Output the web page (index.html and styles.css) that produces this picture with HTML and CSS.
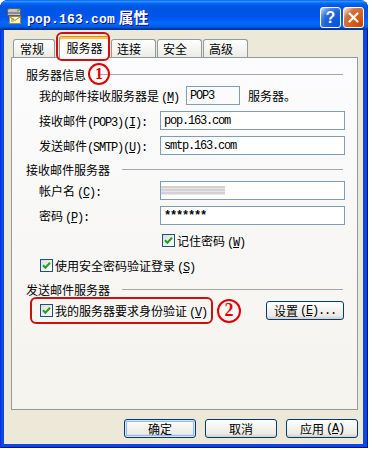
FILE: index.html
```html
<!DOCTYPE html>
<html lang="zh-CN">
<head>
    <meta charset="UTF-8">
    <title>pop.163.com 属性</title>
    <link rel="stylesheet" href="styles.css">
</head>
<body>
    <div class="window">
        <!-- 标题栏 -->
        <div class="titlebar">
            <svg class="app-icon" viewBox="0 0 16 18" width="16" height="18">
                <path d="M1.5 3.5 Q1.5 1.5 3.5 1.5 H12.5 Q14.5 1.5 14.5 3.5 V8.5 H1.5 Z" fill="#c4c4c4" stroke="#5c5c5c"/>
                <rect x="2" y="5" width="12" height="2" fill="#8c8c8c"/>
                <circle cx="12.2" cy="3.4" r="1.1" fill="#2fc43a"/>
                <rect x="3.5" y="9.5" width="11" height="7" fill="#fff8c8" stroke="#9c8a3e"/>
                <path d="M3.5 9.5 L9 13.5 L14.5 9.5 M5 12 H8 M5 14 H8" fill="none" stroke="#9c8a3e"/>
            </svg>
            <span class="title"><span class="lat">pop.163.com</span> 属性</span>
            <div class="controls">
                <span class="ctl ctl-help">?</span>
                <span class="ctl ctl-close">
                    <svg width="11" height="11" viewBox="0 0 11 11"><path d="M1.5 1.5 L9.5 9.5 M9.5 1.5 L1.5 9.5" stroke="#fff" stroke-width="2.2" stroke-linecap="round"/></svg>
                </span>
            </div>
        </div>

        <div class="client">
            <!-- 选项卡 -->
            <div class="tabs">
                <div class="tab tab-first">常规</div>
                <div class="tab tab-active">服务器<span class="mark-tab"></span></div>
                <div class="tab">连接</div>
                <div class="tab">安全</div>
                <div class="tab">高级</div>
            </div>

            <div class="panel">
                <div class="group-title">服务器信息<span class="line"></span><span class="circle circle-1">1</span></div>
                <div class="row">
                    <span class="label label-auto">我的邮件接收服务器是<span class="lat acc">(<u>M</u>)</span></span>
                    <span class="field field-ro"><span class="lat">POP3</span></span>
                    <span>服务器。</span>
                </div>
                <div class="row">
                    <span class="label">接收邮件<span class="lat">(POP3)(<u>I</u>):</span></span>
                    <span class="field"><span class="lat">pop.163.com</span></span>
                </div>
                <div class="row">
                    <span class="label">发送邮件<span class="lat">(SMTP)(<u>U</u>):</span></span>
                    <span class="field"><span class="lat">smtp.163.com</span></span>
                </div>

                <div class="group-title">接收邮件服务器<span class="line"></span></div>
                <div class="row">
                    <span class="label">帐户名<span class="lat acc">(<u>C</u>):</span></span>
                    <span class="field field-blur"><span class="blur"></span></span>
                </div>
                <div class="row">
                    <span class="label">密码<span class="lat acc">(<u>P</u>):</span></span>
                    <span class="field"><span class="lat pw">*******</span></span>
                </div>
                <div class="row row-check row-check-indent">
                    <span class="check"><svg width="9" height="9" viewBox="0 0 9 9"><path d="M1 4.3 L3.4 6.8 L8 1.8" fill="none" stroke="#21a121" stroke-width="2"/></svg></span>
                    <span>记住密码<span class="lat acc">(<u>W</u>)</span></span>
                </div>
                <div class="row row-check">
                    <span class="check"><svg width="9" height="9" viewBox="0 0 9 9"><path d="M1 4.3 L3.4 6.8 L8 1.8" fill="none" stroke="#21a121" stroke-width="2"/></svg></span>
                    <span>使用安全密码验证登录<span class="lat acc">(<u>S</u>)</span></span>
                </div>

                <div class="group-title">发送邮件服务器<span class="line"></span></div>
                <div class="row row-auth">
                    <span class="mark-row">
                        <span class="check"><svg width="9" height="9" viewBox="0 0 9 9"><path d="M1 4.3 L3.4 6.8 L8 1.8" fill="none" stroke="#21a121" stroke-width="2"/></svg></span>
                        <span>我的服务器要求身份验证<span class="lat acc">(<u>V</u>)</span></span>
                    </span>
                    <span class="circle circle-2">2</span>
                    <span class="btn btn-set">设置<span class="lat acc">(<u>E</u>)...</span></span>
                </div>
            </div>

            <!-- 底部按钮 -->
            <div class="actions">
                <span class="btn btn-default">确定</span>
                <span class="btn">取消</span>
                <span class="btn">应用<span class="lat acc">(<u>A</u>)</span></span>
            </div>
        </div>
    </div>
</body>
</html>
```

FILE: styles.css
```css
body {
    margin: 0;
    background: #fff;
    font-family: "Noto Sans CJK SC", sans-serif;
    font-size: 12px;
    color: #000;
}
.lat {
    font-family: "Liberation Mono", "Noto Sans CJK SC", monospace;
    font-size: 12px;
    letter-spacing: -1.2px;
}
.acc {
    margin-left: 2px;
}

/* 窗口框架 */
.window {
    width: 368px;
    height: 448px;
    box-sizing: border-box;
    background: #0a47e4;
    border-radius: 8px 8px 0 0;
    box-shadow: inset 1px 0 #0831d9, inset -1px -1px #00138c;
    display: flex;
    flex-direction: column;
    overflow: hidden;
}
.titlebar {
    height: 30px;
    flex-shrink: 0;
    display: flex;
    align-items: center;
    padding: 0 4px 0 6px;
    border-radius: 8px 8px 0 0;
    background: linear-gradient(to bottom, #0058ee 0%, #3593ff 4%, #288eff 6%, #127dff 8%, #036ffc 10%, #0262ee 14%, #0057e5 20%, #0054e3 24%, #0055eb 56%, #005bf5 66%, #026afe 76%, #0062ef 86%, #0052d6 92%, #0040ab 94%, #003092 100%);
}
.app-icon {
    margin: 2px 5px 0 0;
}
.title {
    flex: 1;
    margin-top: 3px;
    color: #fff;
    font-size: 15px;
    font-weight: bold;
    text-shadow: 1px 1px #0f1089;
}
.title .lat {
    font-size: 13px;
    font-weight: bold;
    letter-spacing: 0.2px;
}
.controls {
    display: flex;
    gap: 2px;
    align-self: flex-start;
    margin-top: 7px;
}
.ctl {
    width: 21px;
    height: 21px;
    box-sizing: border-box;
    border: 1px solid #fff;
    border-radius: 3px;
    display: flex;
    align-items: center;
    justify-content: center;
}
.ctl-help {
    background: radial-gradient(circle at 90% 90%, #0054e9 0%, #2263d5 55%, #4479e4 70%, #a3bbec 90%, #fff 100%);
    color: #fff;
    font: bold 16px "Liberation Sans", sans-serif;
}
.ctl-close {
    background: radial-gradient(circle at 90% 90%, #cc4600 0%, #dc6527 55%, #cd7546 70%, #ffccb2 90%, #fff 100%);
}

.client {
    flex: 1;
    margin: 0 5px 4px 4px;
    padding-top: 6px;
    background: #ece9d8;
    display: flex;
    flex-direction: column;
}

/* 选项卡 */
.tabs {
    position: relative;
    z-index: 1;
    display: flex;
    align-items: flex-end;
    height: 22px;
    padding-left: 9px;
    margin-bottom: -1px;
}
.tab {
    box-sizing: border-box;
    width: 45px;
    height: 18px;
    margin: 0 1px 1px 0;
    padding-left: 5px;
    border: 1px solid #919b9c;
    border-bottom: none;
    border-radius: 3px 3px 0 0;
    background: linear-gradient(#fff, #ecebe6);
    line-height: 17px;
}
.tab-first {
    width: 42px;
    margin-right: 4px;
    padding-left: 6px;
}
.tab-active {
    position: relative;
    width: 51px;
    height: 22px;
    margin-bottom: 0;
    padding-left: 0;
    text-align: center;
    border-top-color: #e68b2c;
    background: #fcfcfe;
    box-shadow: inset 0 2px #ffc73c;
    line-height: 21px;
}
.mark-tab {
    position: absolute;
    left: -4px;
    top: -5px;
    right: -1px;
    bottom: -3px;
    border: 2px solid #cc1010;
    border-radius: 6px;
}

.panel {
    box-sizing: border-box;
    height: 353px;
    margin: 0 5px 0 7px;
    padding: 4px 12px 0 14px;
    border: 1px solid #919b9c;
    background: linear-gradient(#fcfcfe, #f4f3ee);
}
.group-title {
    position: relative;
    display: flex;
    align-items: center;
    height: 16px;
    margin-top: 4px;
}
.group-title .line {
    flex: 1;
    margin: 0 2px 0 12px;
    border-top: 1px solid #a7a7a7;
}
.row {
    display: flex;
    align-items: center;
    height: 23px;
    margin-top: 2px;
    padding-left: 13px;
}
.label {
    width: 121px;
    flex-shrink: 0;
}
.label-auto {
    width: auto;
    margin-right: 7px;
}
.field {
    box-sizing: border-box;
    width: 185px;
    height: 19px;
    padding-left: 3px;
    border: 1px solid #7f9db9;
    background: #fff;
    display: flex;
    align-items: center;
}
.field-ro {
    width: 54px;
    margin-right: 8px;
    background: transparent;
}
.field-blur {
    padding-left: 0;
}
.blur {
    width: 64px;
    height: 9px;
    background: repeating-linear-gradient(180deg, #d2d2d2 0 2px, #e6e6e6 2px 3px);
}
.pw {
    font-weight: bold;
    vertical-align: -3px;
}
.row-check {
    padding-left: 14px;
}
.row-check-indent {
    padding-left: 136px;
}
.check {
    box-sizing: border-box;
    width: 13px;
    height: 13px;
    margin-right: 2px;
    border: 1px solid #1c5180;
    background: linear-gradient(135deg, #dcdcd7, #fff);
    display: inline-flex;
    align-items: center;
    justify-content: center;
    flex-shrink: 0;
}

.row-auth {
    height: 27px;
    margin-top: 0;
    padding: 0 1px 0 4px;
}
.mark-row {
    box-sizing: border-box;
    height: 27px;
    padding: 0 4px 0 8px;
    border: 2px solid #cc1010;
    border-radius: 6px;
    display: flex;
    align-items: center;
}
.circle {
    box-sizing: border-box;
    width: 22px;
    height: 22px;
    border: 2px solid #e00000;
    border-radius: 50%;
    color: #e00000;
    font: bold 16px "Liberation Serif", serif;
    display: flex;
    align-items: center;
    justify-content: center;
}
.circle-1 {
    position: absolute;
    left: 62px;
    top: -3px;
}
.circle-2 {
    width: 24px;
    height: 24px;
    margin-left: 4px;
    font-size: 18px;
}

/* 按钮 */
.btn {
    box-sizing: border-box;
    width: 72px;
    height: 19px;
    border: 1px solid #003c74;
    border-radius: 3px;
    background: linear-gradient(180deg, #fff, #f3f3ef 45%, #ecebe6 80%, #d6d0c5);
    display: flex;
    align-items: center;
    justify-content: center;
    line-height: 1;
}
.btn-set {
    width: 78px;
    margin-left: auto;
}
.btn-default {
    box-shadow: inset 0 0 0 1px #cee7ff, inset 0 0 0 2px #98b8ea;
}
.actions {
    display: flex;
    justify-content: flex-end;
    gap: 9px;
    margin-top: 9px;
    padding-right: 5px;
}
```
